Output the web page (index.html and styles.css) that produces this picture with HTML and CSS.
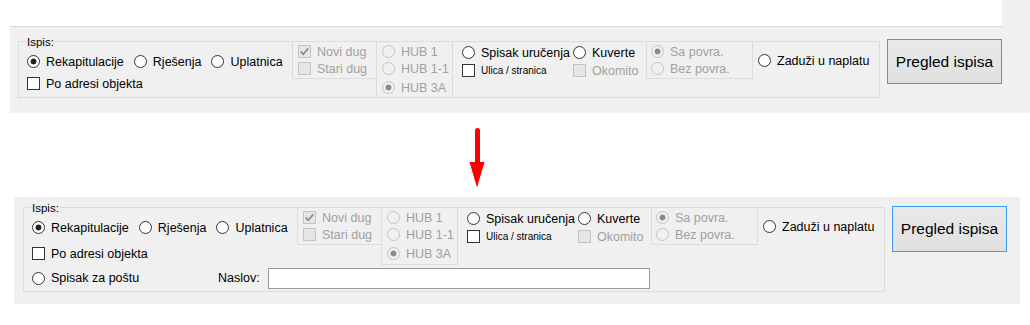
FILE: index.html
```html
<!DOCTYPE html>
<html lang="hr">
<head>
    <meta charset="UTF-8">
    <title>Ispis - prije i poslije</title>
    <link rel="stylesheet" href="styles.css">
</head>
<body>
    <!-- Stari izgled -->
    <div class="shot shot-before">
        <div class="strip"></div>
        <div class="form">
            <div class="grp">
                <span class="legend">Ispis:</span>
                <div class="area">
                    <div class="col col-main">
                        <div class="opts">
                            <label class="opt"><span class="rb on"></span>Rekapitulacije</label>
                            <label class="opt"><span class="rb"></span>Rješenja</label>
                            <label class="opt"><span class="rb"></span>Uplatnica</label>
                        </div>
                        <label class="opt opt-adresa"><span class="cb"></span>Po adresi objekta</label>
                    </div>
                    <div class="sub sub-dug off">
                        <label class="opt"><span class="cb on"><svg viewBox="0 0 11 11"><polyline points="1.8,5.6 4.3,8.2 9.2,2.4"/></svg></span>Novi dug</label>
                        <label class="opt"><span class="cb"></span>Stari dug</label>
                    </div>
                    <div class="sub sub-hub off">
                        <label class="opt"><span class="rb"></span>HUB 1</label>
                        <label class="opt"><span class="rb"></span>HUB 1-1</label>
                        <label class="opt opt-3a"><span class="rb on"></span>HUB 3A</label>
                    </div>
                    <div class="col col-spisak">
                        <label class="opt"><span class="rb"></span>Spisak uručenja</label>
                        <label class="opt"><span class="rb"></span>Kuverte</label>
                        <label class="opt small"><span class="cb"></span>Ulica / stranica</label>
                        <label class="opt off"><span class="cb"></span>Okomito</label>
                    </div>
                    <div class="sub sub-povrat off">
                        <label class="opt"><span class="rb on"></span>Sa povra.</label>
                        <label class="opt"><span class="rb"></span>Bez povra.</label>
                    </div>
                    <div class="col col-zaduzi">
                        <label class="opt"><span class="rb"></span>Zaduži u naplatu</label>
                    </div>
                </div>
            </div>
            <button class="btn">Pregled ispisa</button>
        </div>
    </div>

    <div class="arrow">
        <svg width="20" height="62" viewBox="0 0 20 62">
            <line x1="9.5" y1="3.5" x2="9.5" y2="37" stroke="#ff0000" stroke-width="5" stroke-linecap="round"/>
            <polygon points="1.5,35 16.5,35 9,60.5" fill="#ff0000"/>
        </svg>
    </div>

    <!-- Novi izgled -->
    <div class="shot shot-after">
        <div class="form">
            <div class="grp grp-post">
                <span class="legend">Ispis:</span>
                <div class="area">
                    <div class="col col-main">
                        <div class="opts">
                            <label class="opt"><span class="rb on"></span>Rekapitulacije</label>
                            <label class="opt"><span class="rb"></span>Rješenja</label>
                            <label class="opt"><span class="rb"></span>Uplatnica</label>
                        </div>
                        <label class="opt opt-adresa"><span class="cb"></span>Po adresi objekta</label>
                    </div>
                    <div class="sub sub-dug off">
                        <label class="opt"><span class="cb on"><svg viewBox="0 0 11 11"><polyline points="1.8,5.6 4.3,8.2 9.2,2.4"/></svg></span>Novi dug</label>
                        <label class="opt"><span class="cb"></span>Stari dug</label>
                    </div>
                    <div class="sub sub-hub off">
                        <label class="opt"><span class="rb"></span>HUB 1</label>
                        <label class="opt"><span class="rb"></span>HUB 1-1</label>
                        <label class="opt opt-3a"><span class="rb on"></span>HUB 3A</label>
                    </div>
                    <div class="col col-spisak">
                        <label class="opt"><span class="rb"></span>Spisak uručenja</label>
                        <label class="opt"><span class="rb"></span>Kuverte</label>
                        <label class="opt small"><span class="cb"></span>Ulica / stranica</label>
                        <label class="opt off"><span class="cb"></span>Okomito</label>
                    </div>
                    <div class="sub sub-povrat off">
                        <label class="opt"><span class="rb on"></span>Sa povra.</label>
                        <label class="opt"><span class="rb"></span>Bez povra.</label>
                    </div>
                    <div class="col col-zaduzi">
                        <label class="opt"><span class="rb"></span>Zaduži u naplatu</label>
                    </div>
                </div>
                <!-- novi red -->
                <div class="post-row">
                    <label class="opt post-opt"><span class="rb"></span>Spisak za poštu</label>
                    <label class="naslov" for="naslov">Naslov:</label>
                    <input class="txt" id="naslov" type="text">
                </div>
            </div>
            <button class="btn">Pregled ispisa</button>
        </div>
    </div>
</body>
</html>
```

FILE: styles.css
```css
/* Osnova */
body {
    margin: 0;
    background: #fff;
    font-family: 'Liberation Sans', Arial, sans-serif;
    font-size: 12.5px;
    color: #000;
}

/* Sivi paneli (screenshotovi forme) */
.shot {
    background: #f0f0f0;
}

.shot-before {
    margin-left: 10px;
    width: 1020px;
    height: 113px;
}

.shot-after {
    margin: 8px 0 0 14px;
    width: 1006px;
    height: 107px;
}

.strip {
    width: 992px;
    height: 26px;
    background: #fff;
    border-bottom: 1px solid #dadada;
}

.form {
    display: flex;
    align-items: flex-start;
    gap: 7px;
}

.shot-before .form {
    padding: 12px 0 0 8px;
}

.shot-before .grp {
    margin-top: 2px;
}

.shot-after .form {
    padding: 9px 0 0 9px;
}

.shot-after .grp {
    margin-top: 1px;
}

/* Group box */
.grp {
    position: relative;
    width: 862px;
    box-sizing: border-box;
    border: 1px solid #dcdcdc;
}

.legend {
    position: absolute;
    top: -6px;
    left: 7px;
    padding: 0 1px;
    background: #f0f0f0;
    font-size: 11.5px;
    line-height: 12px;
}

.area {
    display: flex;
    height: 55px;
}

.grp-post .area {
    height: 57px;
}

.col {
    box-sizing: border-box;
}

.col-main {
    width: 273px;
    padding: 11px 0 0 8px;
}

.opts {
    display: flex;
    gap: 10px;
}

.opt-adresa {
    margin-top: 5px;
}

.grp-post .opt-adresa {
    margin-top: 9px;
}

/* Unutarnji okviri */
.sub {
    box-sizing: border-box;
    border-left: 1px solid #dcdcdc;
}

.sub-dug {
    width: 84px;
    padding: 1px 0 1px 5px;
    align-self: flex-start;
    border-bottom: 1px solid #dcdcdc;
}

.sub-hub {
    width: 77px;
    padding: 1px 0 0 5px;
    border-right: 1px solid #dcdcdc;
}

.grp-post .sub-hub {
    border-bottom: 1px solid #dcdcdc;
}

.opt-3a {
    margin-top: 2px;
}

.col-spisak {
    width: 193px;
    padding: 2px 0 0 9px;
    display: grid;
    grid-template-columns: 111px auto;
    grid-auto-rows: 17px;
    row-gap: 1px;
    align-content: start;
}

.sub-povrat {
    width: 107px;
    padding: 1px 0 1px 4px;
    align-self: flex-start;
    border-right: 1px solid #dcdcdc;
    border-bottom: 1px solid #dcdcdc;
}

.col-zaduzi {
    flex: 1;
    padding: 10px 0 0 5px;
}

/* Radio i checkbox */
.opt {
    display: flex;
    align-items: center;
    gap: 6px;
    height: 17px;
    white-space: nowrap;
}

.opt.small {
    font-size: 10px;
}

.rb,
.cb {
    flex: none;
    width: 13px;
    height: 13px;
    box-sizing: border-box;
    border: 1px solid #333;
    background: #fff;
}

.rb {
    border-radius: 50%;
}

.rb.on {
    background: radial-gradient(circle, #1f1f1f 2.6px, #fff 3.3px);
}

.cb svg {
    display: block;
    width: 11px;
    height: 11px;
}

.cb polyline {
    fill: none;
    stroke: #8a8a8a;
    stroke-width: 1.7;
}

/* Onemoguceno */
.off .opt,
.opt.off {
    color: #a0a0a0;
}

.off .rb,
.off .cb,
.opt.off .cb {
    border-color: #c4c4c4;
}

.off .cb,
.opt.off .cb {
    background: #e6e6e6;
}

.off .rb {
    background: #f0f0f0;
}

.off .rb.on {
    background: radial-gradient(circle, #8a8a8a 2.6px, #f0f0f0 3.3px);
}

/* Red za postu */
.post-row {
    display: flex;
    align-items: center;
    height: 26px;
    padding-left: 8px;
}

.post-opt {
    width: 186px;
}

.naslov {
    width: 50px;
}

.txt {
    width: 382px;
    height: 21px;
    box-sizing: border-box;
    margin: 0;
    border: 1px solid #9a9a9a;
    background: #fff;
    font: inherit;
    outline: none;
}

/* Dugme */
.btn {
    width: 115px;
    height: 45px;
    border: 1px solid #3d9cf0;
    border-radius: 0;
    background: linear-gradient(#e8e8e8, #e1e1e1);
    font-family: 'Liberation Sans', Arial, sans-serif;
    font-size: 15.5px;
    color: #000;
    padding: 0;
}

.shot-after .btn {
    height: 46px;
}

/* Strelica */
.arrow {
    margin: 14px 0 0 468px;
    height: 62px;
}

.arrow svg {
    display: block;
}
```
